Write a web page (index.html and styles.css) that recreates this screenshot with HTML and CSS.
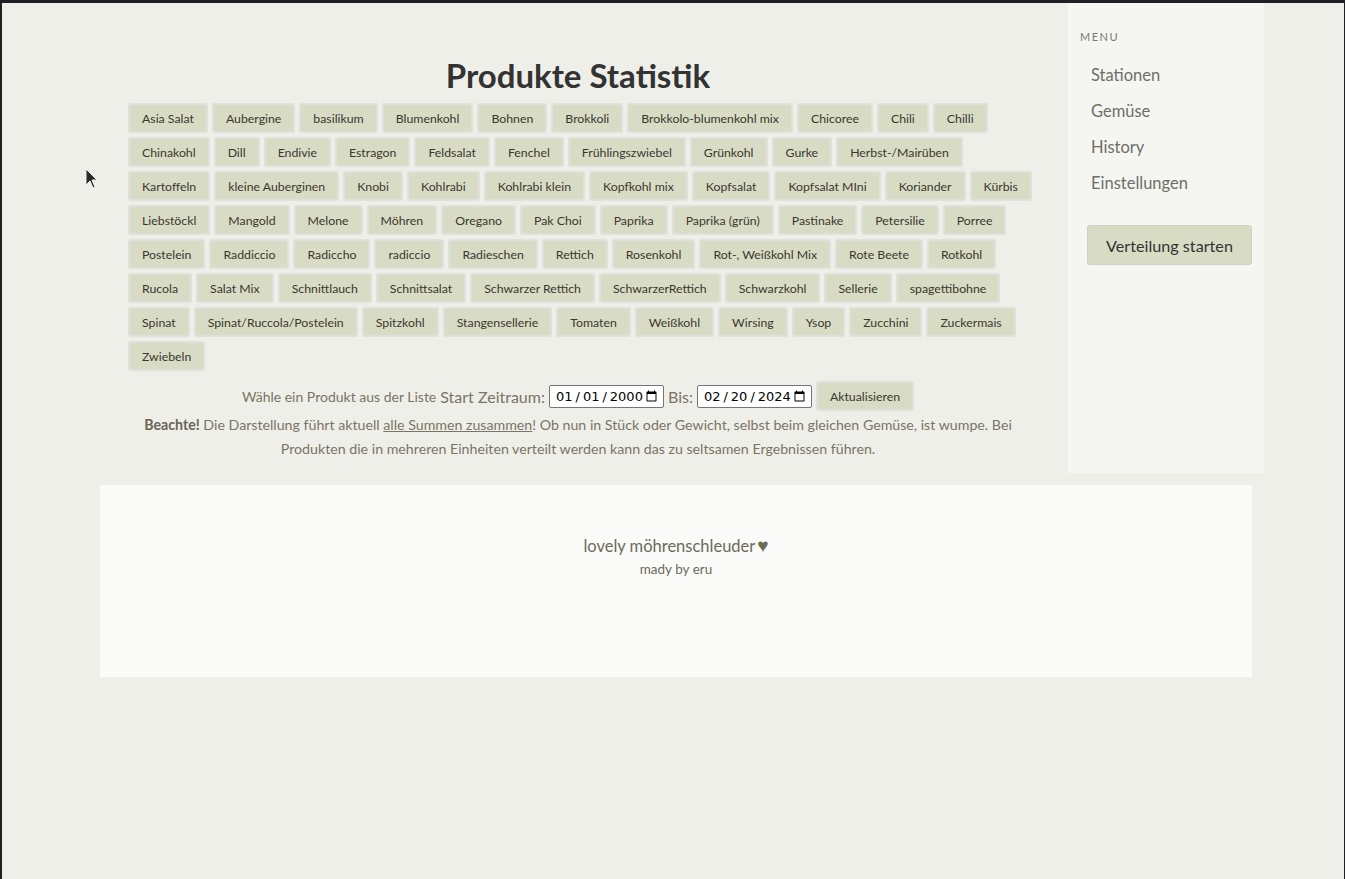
FILE: index.html
```html
<!DOCTYPE html>
<html lang="de">
<head>
<meta charset="utf-8">
<title>Produkte Statistik</title>
<link rel="stylesheet" href="styles.css">
</head>
<body>
<div class="frame">
  <div class="page">
    <div class="layout">
      <main class="main">
        <h1 class="title">Produkte Statistik</h1>
        <div class="chips">
          <button class="chip">Asia Salat</button>
          <button class="chip">Aubergine</button>
          <button class="chip">basilikum</button>
          <button class="chip">Blumenkohl</button>
          <button class="chip">Bohnen</button>
          <button class="chip">Brokkoli</button>
          <button class="chip">Brokkolo-blumenkohl mix</button>
          <button class="chip">Chicoree</button>
          <button class="chip">Chili</button>
          <button class="chip">Chilli</button>
          <button class="chip">Chinakohl</button>
          <button class="chip">Dill</button>
          <button class="chip">Endivie</button>
          <button class="chip">Estragon</button>
          <button class="chip">Feldsalat</button>
          <button class="chip">Fenchel</button>
          <button class="chip">Frühlingszwiebel</button>
          <button class="chip">Grünkohl</button>
          <button class="chip">Gurke</button>
          <button class="chip">Herbst-/Mairüben</button>
          <button class="chip">Kartoffeln</button>
          <button class="chip">kleine Auberginen</button>
          <button class="chip">Knobi</button>
          <button class="chip">Kohlrabi</button>
          <button class="chip">Kohlrabi klein</button>
          <button class="chip">Kopfkohl mix</button>
          <button class="chip">Kopfsalat</button>
          <button class="chip">Kopfsalat MIni</button>
          <button class="chip">Koriander</button>
          <button class="chip">Kürbis</button>
          <button class="chip">Liebstöckl</button>
          <button class="chip">Mangold</button>
          <button class="chip">Melone</button>
          <button class="chip">Möhren</button>
          <button class="chip">Oregano</button>
          <button class="chip">Pak Choi</button>
          <button class="chip">Paprika</button>
          <button class="chip">Paprika (grün)</button>
          <button class="chip">Pastinake</button>
          <button class="chip">Petersilie</button>
          <button class="chip">Porree</button>
          <button class="chip">Postelein</button>
          <button class="chip">Raddiccio</button>
          <button class="chip">Radiccho</button>
          <button class="chip">radiccio</button>
          <button class="chip">Radieschen</button>
          <button class="chip">Rettich</button>
          <button class="chip">Rosenkohl</button>
          <button class="chip">Rot-, Weißkohl Mix</button>
          <button class="chip">Rote Beete</button>
          <button class="chip">Rotkohl</button>
          <button class="chip">Rucola</button>
          <button class="chip">Salat Mix</button>
          <button class="chip">Schnittlauch</button>
          <button class="chip">Schnittsalat</button>
          <button class="chip">Schwarzer Rettich</button>
          <button class="chip">SchwarzerRettich</button>
          <button class="chip">Schwarzkohl</button>
          <button class="chip">Sellerie</button>
          <button class="chip">spagettibohne</button>
          <button class="chip">Spinat</button>
          <button class="chip">Spinat/Ruccola/Postelein</button>
          <button class="chip">Spitzkohl</button>
          <button class="chip">Stangensellerie</button>
          <button class="chip">Tomaten</button>
          <button class="chip">Weißkohl</button>
          <button class="chip">Wirsing</button>
          <button class="chip">Ysop</button>
          <button class="chip">Zucchini</button>
          <button class="chip">Zuckermais</button>
          <button class="chip">Zwiebeln</button>
        </div>
        <div class="filter">
          <span class="hint">Wähle ein Produkt aus der Liste</span>
          <label class="lbl" for="start">Start Zeitraum:</label>
          <input class="date" id="start" type="date" value="2000-01-01">
          <label class="lbl" for="end">Bis:</label>
          <input class="date" id="end" type="date" value="2024-02-20">
          <button class="chip update">Aktualisieren</button>
        </div>
        <p class="note"><b>Beachte!</b> Die Darstellung führt aktuell <u>alle Summen zusammen</u>! Ob nun in Stück oder Gewicht, selbst beim gleichen Gemüse, ist wumpe. Bei Produkten die in mehreren Einheiten verteilt werden kann das zu seltsamen Ergebnissen führen.</p>
      </main>
      <aside class="sidebar">
        <div class="menu-title">MENU</div>
        <nav class="menu">
          <a class="menu-link" href="#">Stationen</a>
          <a class="menu-link" href="#">Gemüse</a>
          <a class="menu-link" href="#">History</a>
          <a class="menu-link" href="#">Einstellungen</a>
        </nav>
        <button class="start-btn">Verteilung starten</button>
      </aside>
    </div>
    <footer class="footer">
      <div class="footer-main">lovely möhrenschleuder<span class="heart">♥</span></div>
      <div class="footer-sub">mady by eru</div>
    </footer>
  </div>
  <svg class="cursor" width="14" height="22" viewBox="0 0 14 22"><path d="M1 1 L1 17 L5 13 L8 20 L10 19 L7 12 L12 12 Z" fill="#2a2a2a" stroke="#f0f0f0" stroke-width="1"/></svg>
</div>
</body>
</html>
```

FILE: styles.css
```css
html, body {
  margin: 0;
  padding: 0;
  background: #1f1f26;
}

body {
  font-family: "Lato", "Open Sans", sans-serif;
  color: #333;
}

.frame {
  position: relative;
  box-sizing: border-box;
  margin-top: 3px;
  margin-left: 2px;
  margin-right: 1px;
  height: 876px;
  background: #efefea;
  overflow: hidden;
}

.page {
  padding-left: 98px;
}

.layout {
  display: flex;
  align-items: flex-start;
  gap: 12px;
}

.main {
  width: 956px;
  box-sizing: border-box;
  padding: 52px 28px 0 28px;
}

.title {
  margin: 0 0 8px 0;
  text-align: center;
  font-size: 33px;
  line-height: 40px;
  font-weight: 700;
  color: #333;
}

.chips {
  display: flex;
  flex-wrap: wrap;
  gap: 4px;
  margin-right: -18px;
}

.chip {
  box-sizing: border-box;
  height: 30px;
  padding: 0 12px;
  border: 2px solid #e0e0dc;
  border-radius: 2px;
  background: #d9dcc4;
  font-family: inherit;
  font-size: 12.3px;
  color: #3a3730;
  cursor: pointer;
}

.filter {
  display: flex;
  justify-content: center;
  align-items: center;
  gap: 4px;
  margin-top: 10px;
  color: #7a7464;
}

.hint {
  font-size: 14px;
}

.lbl {
  font-size: 16px;
}

.date {
  box-sizing: border-box;
  height: 23px;
  width: 115px;
  border: 1px solid #767676;
  border-radius: 2px;
  background: #fff;
  font-family: "DejaVu Sans", sans-serif;
  font-size: 13px;
  color: #000;
  padding: 0 3px 0 5px;
}

.date::-webkit-datetime-edit-text {
  padding: 0 2px;
}

.update {
  margin-left: 0;
}

.note {
  margin: 2px 0 0 0;
  text-align: center;
  font-size: 14.2px;
  line-height: 24px;
  color: #7a7464;
}

.note b {
  color: #6b6556;
}

.sidebar {
  width: 196px;
  height: 470px;
  box-sizing: border-box;
  background: #f5f6f2;
  padding: 27px 12px 0 12px;
}

.menu-title {
  font-size: 11px;
  letter-spacing: 1.5px;
  color: #7a7a74;
  line-height: 14px;
}

.menu {
  display: flex;
  flex-direction: column;
  margin-top: 13px;
  padding-left: 11px;
}

.menu-link {
  display: block;
  font-size: 16.5px;
  line-height: 36px;
  color: #6e6e66;
  text-decoration: none;
}

.start-btn {
  display: block;
  margin: 24px 0 0 7px;
  width: 165px;
  height: 40px;
  box-sizing: border-box;
  background: #d9dcc4;
  border: 1px solid #d0d0c8;
  border-radius: 3px;
  font-family: inherit;
  font-size: 16.2px;
  color: #333;
}

.footer {
  width: 1152px;
  height: 192px;
  margin-top: 12px;
  background: #fafaf9;
  box-sizing: border-box;
  padding-top: 48px;
  text-align: center;
}

.footer-main {
  font-size: 16.5px;
  line-height: 24px;
  color: #6b6b5a;
}

.heart {
  font-size: 19px;
  margin-left: 2px;
  color: #6b6b55;
}

.footer-sub {
  margin-top: 1px;
  font-size: 13.5px;
  line-height: 20px;
  color: #6b6b5a;
}

.cursor {
  position: absolute;
  left: 83px;
  top: 165px;
}
```
